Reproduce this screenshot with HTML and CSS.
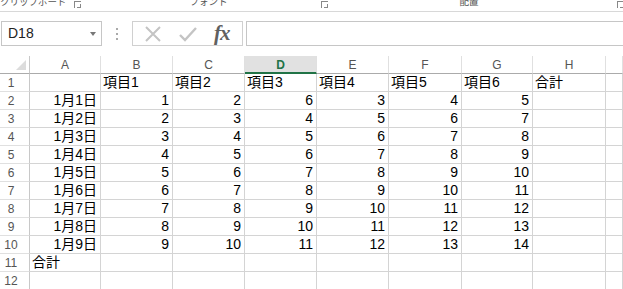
FILE: index.html
```html
<!DOCTYPE html>
<html lang="ja">
<head>
    <meta charset="UTF-8">
    <title>Book1 - Excel</title>
    <link rel="stylesheet" href="styles.css">
</head>
<body>

<div class="ribbon-labels">
    <div class="group group-clip"><span class="group-name">クリップボード</span><span class="launcher"></span></div>
    <div class="group group-font"><span class="group-name">フォント</span><span class="launcher"></span></div>
    <div class="group group-align"><span class="group-name">配置</span><span class="launcher"></span></div>
</div>

<div class="formula-bar">
    <div class="name-box">D18<span class="drop"></span></div>
    <div class="grip"><i></i><i></i><i></i></div>
    <div class="fx-box">
        <svg class="fx-icon" width="20" height="20" viewBox="0 0 20 20">
            <path d="M3 3 L17 17 M17 3 L3 17" stroke="#c4c4c4" stroke-width="2" fill="none"/>
        </svg>
        <svg class="fx-icon" width="20" height="20" viewBox="0 0 20 20">
            <path d="M2 11 L7 16 L18 4" stroke="#c4c4c4" stroke-width="2.4" fill="none"/>
        </svg>
        <span class="fx">fx</span>
    </div>
    <div class="formula-input"></div>
</div>

<div class="sheet" id="sheet"></div>

<script>
    const cols = ['', 'A', 'B', 'C', 'D', 'E', 'F', 'G', 'H', ''];
    // values for 項目1..項目6, one row per day
    const values = [
        [1, 2, 6, 3, 4, 5],
        [2, 3, 4, 5, 6, 7],
        [3, 4, 5, 6, 7, 8],
        [4, 5, 6, 7, 8, 9],
        [5, 6, 7, 8, 9, 10],
        [6, 7, 8, 9, 10, 11],
        [7, 8, 9, 10, 11, 12],
        [8, 9, 10, 11, 12, 13],
        [9, 10, 11, 12, 13, 14]
    ];
    const sheet = document.getElementById('sheet');

    function addCell(cls, text) {
        const cell = document.createElement('div');
        cell.className = cls;
        cell.textContent = text;
        sheet.appendChild(cell);
    }

    // column headers
    cols.forEach((c, i) => {
        if (i === 0) {
            addCell('corner', '');
        } else {
            addCell(c === 'D' ? 'col-head selected' : 'col-head', c);
        }
    });

    for (let r = 1; r <= 12; r++) {
        addCell('row-head', r);
        for (let c = 1; c < cols.length; c++) {
            let text = '';
            let cls = 'cell';
            if (r === 1 && c >= 2 && c <= 7) text = '項目' + (c - 1);
            if (r === 1 && c === 8) text = '合計';
            if (r >= 2 && r <= 10) {
                const day = r - 1;
                if (c === 1) { text = '1月' + day + '日'; cls += ' num'; }
                if (c >= 2 && c <= 7) { text = values[day - 1][c - 2]; cls += ' num'; }
            }
            if (r === 11 && c === 1) text = '合計';
            addCell(cls, text);
        }
    }
</script>

</body>
</html>
```

FILE: styles.css
```css
body {
    margin: 0;
    background-color: #fff;
    font-family: "Liberation Sans", "Noto Sans CJK JP", sans-serif;
    overflow: hidden;
}

/* ribbon group names, cut off at the top */
.ribbon-labels {
    display: flex;
    height: 11px;
    border-bottom: 1px solid #d8d8d8;
    overflow: hidden;
    color: #555;
    font-size: 9.5px;
}

.group {
    position: relative;
    height: 11px;
}

.group-name {
    display: block;
    line-height: 12px;
    margin-top: -4px;
    white-space: nowrap;
}

.group-clip {
    width: 86px;
}

.group-font {
    width: 245px;
    text-align: center;
}

.group-align {
    flex: 1;
    padding-right: 16px;
    text-align: center;
}

.launcher {
    position: absolute;
    top: 1px;
    width: 6px;
    height: 6px;
    border-left: 1px solid #888;
    border-top: 1px solid #888;
}

.launcher::after {
    content: "";
    position: absolute;
    left: 2px;
    top: 2px;
    width: 3px;
    height: 3px;
    border-right: 1px solid #888;
    border-bottom: 1px solid #888;
}

.group-clip .launcher {
    right: 5px;
}

.group-font .launcher {
    right: 3px;
}

.group-align .launcher {
    right: -1px;
}

.formula-bar {
    display: flex;
    align-items: center;
    height: 25px;
    margin-top: 9px;
}

.name-box {
    position: relative;
    box-sizing: border-box;
    width: 101px;
    height: 25px;
    margin-left: 1px;
    border: 1px solid #c6c6c6;
    font-size: 14px;
    line-height: 23px;
    padding-left: 6px;
    color: #222;
}

.drop {
    position: absolute;
    right: 5px;
    top: 10px;
    border-left: 3px solid transparent;
    border-right: 3px solid transparent;
    border-top: 4px solid #777;
}

.grip {
    display: flex;
    flex-direction: column;
    gap: 3px;
    width: 2px;
    margin: 0 14px 0 14px;
}

.grip i {
    width: 2px;
    height: 2px;
    background-color: #aaa;
}

.fx-box {
    box-sizing: border-box;
    display: flex;
    align-items: center;
    gap: 15px;
    width: 111px;
    height: 25px;
    padding-left: 10px;
    border: 1px solid #d0d0d0;
}

.fx {
    font-family: "Liberation Serif", serif;
    font-style: italic;
    font-weight: bold;
    font-size: 21px;
    color: #606060;
    letter-spacing: -1px;
    margin-left: 1px;
}

.formula-input {
    flex: 1;
    box-sizing: border-box;
    height: 25px;
    margin-left: 3px;
    border: 1px solid #c6c6c6;
    border-right: none;
}

/* worksheet grid */
.sheet {
    display: grid;
    grid-template-columns: 30px 71px 72px 72px 72px 72px 73px 71px 73px 1fr;
    grid-auto-rows: 18px;
    margin-top: 10px;
}

.sheet div {
    box-sizing: border-box;
    white-space: nowrap;
}

.corner {
    position: relative;
    border-bottom: 1px solid #ababab;
    border-right: 1px solid #c8c8c8;
}

.corner::after {
    content: "";
    position: absolute;
    right: 3px;
    bottom: 3px;
    border-left: 10px solid transparent;
    border-bottom: 10px solid #dcdcdc;
}

.col-head {
    border-bottom: 1px solid #ababab;
    border-right: 1px solid #e0e0e0;
    text-align: center;
    font-size: 12px;
    line-height: 18px;
    color: #555;
}

.col-head.selected {
    background-color: #e1e1e1;
    border-bottom: 2px solid #217346;
    color: #217346;
    font-weight: bold;
}

.row-head {
    border-right: 1px solid #c8c8c8;
    border-bottom: 1px solid #e0e0e0;
    padding-right: 7px;
    text-align: center;
    font-size: 12px;
    line-height: 18px;
    color: #555;
}

.cell {
    border-right: 1px solid #d4d4d4;
    border-bottom: 1px solid #d4d4d4;
    padding: 0 2px;
    font-size: 14px;
    line-height: 17px;
    color: #000;
}

.cell.num {
    text-align: right;
    padding-right: 3px;
}
```
